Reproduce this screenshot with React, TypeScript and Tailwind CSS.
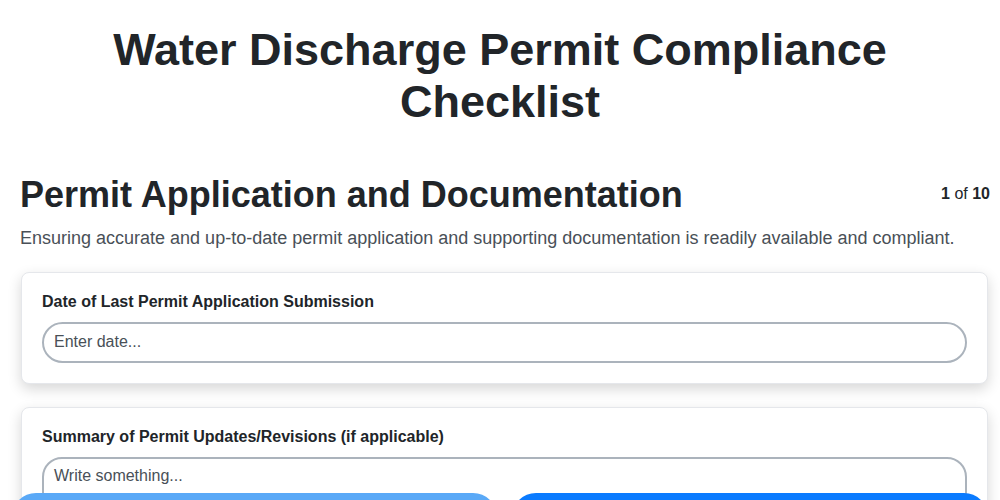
import React from 'react';

const fields = [
  { label: 'Date of Last Permit Application Submission', kind: 'input', placeholder: 'Enter date...' },
  { label: 'Summary of Permit Updates/Revisions (if applicable)', kind: 'textarea', placeholder: 'Write something...' },
];

export default function App() {
  return (
    <div className="min-h-screen bg-white text-[#212529] font-['Liberation_Sans',Arial,sans-serif]">
      <h1 className="px-5 pt-6 text-center text-[45px] font-bold leading-[1.15]">
        Water Discharge Permit Compliance Checklist
      </h1>

      <div className="pl-5 pr-[10px] pb-24">
        <div className="mt-[45px] flex items-center justify-between">
          <h2 className="text-[36px] font-bold leading-[1.2]">Permit Application and Documentation</h2>
          <div className="text-[16px]">
            <span className="font-bold">1</span> of <span className="font-bold">10</span>
          </div>
        </div>
        <p className="mt-[9px] text-[18px] text-[#495057]">
          Ensuring accurate and up-to-date permit application and supporting documentation is readily available and compliant.
        </p>

        <div className="mt-5 ml-px mr-[2px] flex flex-col gap-[23px]">
          {fields.map((f) => (
            <div
              key={f.label}
              className="rounded-lg border border-[#e5e7eb] bg-white px-5 pt-[17px] pb-5 shadow-[0_5px_14px_rgba(0,0,0,0.16)]"
            >
              <label className="block text-[16px] font-bold mb-2">{f.label}</label>
              {f.kind === 'input' ? (
                <input
                  className="w-full h-[41px] rounded-full border-2 border-[#abb3bc] px-[10px] text-[16px] placeholder:text-[#495057] outline-none"
                  placeholder={f.placeholder}
                />
              ) : (
                <textarea
                  className="w-full h-[100px] rounded-[20px] border-2 border-[#abb3bc] px-[10px] pt-[5px] text-[16px] placeholder:text-[#495057] outline-none resize-none"
                  placeholder={f.placeholder}
                />
              )}
            </div>
          ))}
        </div>
      </div>

      <div className="fixed bottom-0 left-0 right-0 flex gap-[15px] px-3 translate-y-[calc(100%-7px)]">
        <button aria-label="Previous" className="w-[485px] h-[48px] rounded-[24px] bg-[#5aa9f7]" />
        <button aria-label="Next" className="flex-1 h-[48px] rounded-[24px] bg-[#0a7bff]" />
      </div>
    </div>
  );
}
